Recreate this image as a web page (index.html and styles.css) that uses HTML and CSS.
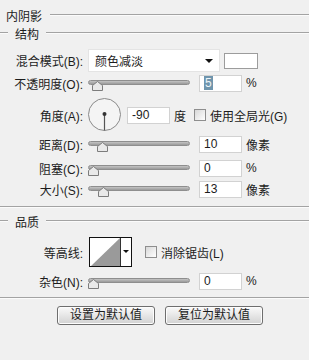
FILE: index.html
```html
<!DOCTYPE html>
<html lang="zh-CN">
<head>
    <meta charset="UTF-8">
    <meta name="viewport" content="width=device-width, initial-scale=1.0">
    <title>内阴影</title>
    <link rel="stylesheet" href="styles.css">
</head>
<body>
    <div class="panel">
        <div class="heading"><span>内阴影</span><i class="rule"></i></div>

        <div class="legend"><i class="rule-short"></i><span>结构</span><i class="rule"></i></div>

        <div class="row row-blend">
            <label class="lbl">混合模式(B):</label>
            <div class="select"><span>颜色减淡</span><i class="caret"></i></div>
            <div class="swatch"></div>
        </div>

        <div class="row row-slider row-opacity">
            <label class="lbl">不透明度(O):</label>
            <div class="slider">
                <div class="track"></div>
                <svg class="thumb" style="left:4px" width="11" height="10" viewBox="0 0 11 10"><polygon points="0.5,9.5 0.5,4.5 5.5,0.5 10.5,4.5 10.5,9.5" /></svg>
            </div>
            <div class="field"><span class="selected">5</span></div>
            <span class="unit">%</span>
        </div>

        <div class="row row-angle">
            <label class="lbl">角度(A):</label>
            <svg class="dial" width="36" height="36" viewBox="0 0 36 36">
                <circle cx="17.5" cy="17.5" r="16" fill="#f4f4f4" stroke="#8a8a8a" stroke-width="1" />
                <line x1="17.5" y1="17" x2="17.5" y2="33.5" stroke="#555" stroke-width="1.2" />
                <circle cx="17.5" cy="17" r="2" fill="#333" />
            </svg>
            <div class="field field-angle">-90</div>
            <span class="unit">度</span>
            <span class="check check-global"></span>
            <span class="check-text">使用全局光(G)</span>
        </div>

        <div class="row row-slider row-distance">
            <label class="lbl">距离(D):</label>
            <div class="slider">
                <div class="track"></div>
                <svg class="thumb" style="left:9px" width="11" height="10" viewBox="0 0 11 10"><polygon points="0.5,9.5 0.5,4.5 5.5,0.5 10.5,4.5 10.5,9.5" /></svg>
            </div>
            <div class="field">10</div>
            <span class="unit">像素</span>
        </div>

        <div class="row row-slider row-choke">
            <label class="lbl">阻塞(C):</label>
            <div class="slider">
                <div class="track"></div>
                <svg class="thumb" style="left:0px" width="11" height="10" viewBox="0 0 11 10"><polygon points="0.5,9.5 0.5,4.5 5.5,0.5 10.5,4.5 10.5,9.5" /></svg>
            </div>
            <div class="field">0</div>
            <span class="unit">%</span>
        </div>

        <div class="row row-slider row-size">
            <label class="lbl">大小(S):</label>
            <div class="slider">
                <div class="track"></div>
                <svg class="thumb" style="left:10px" width="11" height="10" viewBox="0 0 11 10"><polygon points="0.5,9.5 0.5,4.5 5.5,0.5 10.5,4.5 10.5,9.5" /></svg>
            </div>
            <div class="field">13</div>
            <span class="unit">像素</span>
        </div>

        <div class="separator sep-structure"></div>

        <div class="legend legend-quality"><i class="rule-short"></i><span>品质</span><i class="rule"></i></div>

        <div class="row row-contour">
            <label class="lbl">等高线:</label>
            <div class="contour">
                <svg class="curve" width="30" height="28" viewBox="0 0 30 28">
                    <rect width="30" height="28" fill="#fff" />
                    <polygon points="1,28 30,0 30,28" fill="#9a9a9a" />
                </svg>
                <div class="contour-drop"><i class="caret caret-small"></i></div>
            </div>
            <span class="check check-aa"></span>
            <span class="check-text">消除锯齿(L)</span>
        </div>

        <div class="row row-slider row-noise">
            <label class="lbl">杂色(N):</label>
            <div class="slider">
                <div class="track"></div>
                <svg class="thumb" style="left:0px" width="11" height="10" viewBox="0 0 11 10"><polygon points="0.5,9.5 0.5,4.5 5.5,0.5 10.5,4.5 10.5,9.5" /></svg>
            </div>
            <div class="field">0</div>
            <span class="unit">%</span>
        </div>

        <div class="separator sep-bottom"></div>

        <div class="buttons">
            <button class="btn">设置为默认值</button>
            <button class="btn">复位为默认值</button>
        </div>
    </div>
</body>
</html>
```

FILE: styles.css
```css
body {
    margin: 0;
    padding: 0;
    background-color: #f0f0f0;
    font-family: "Liberation Sans", "Noto Sans CJK SC", sans-serif;
    font-size: 12px;
    color: #1c1c1c;
}

.panel {
    width: 309px;
    height: 360px;
    display: flex;
    flex-direction: column;
}

.rule {
    flex: 1;
    border-top: 1px solid #a3a3a3;
    border-bottom: 1px solid #fbfbfb;
}

.rule-short {
    width: 8px;
    border-top: 1px solid #a3a3a3;
    border-bottom: 1px solid #fbfbfb;
}

.heading {
    display: flex;
    align-items: center;
    height: 18px;
    margin-top: 6px;
    padding-left: 6px;
}

.heading span {
    margin-right: 8px;
}

.legend {
    display: flex;
    align-items: center;
    height: 18px;
}

.legend span {
    margin: 0 7px;
}

.legend-quality {
    margin-top: 4px;
}

.separator {
    height: 0;
    border-top: 1px solid #a3a3a3;
    border-bottom: 1px solid #fbfbfb;
}

.sep-structure {
    margin-top: 7px;
}

.sep-bottom {
    margin-top: 6px;
}

.row {
    display: flex;
    align-items: center;
}

.lbl {
    width: 83px;
    text-align: right;
    white-space: nowrap;
}

/* blend mode */
.row-blend {
    height: 23px;
    margin-top: 7px;
}

.select {
    position: relative;
    width: 130px;
    height: 21px;
    margin-left: 5px;
    background-color: #fff;
    border: 1px solid #e4e4e4;
    display: flex;
    align-items: center;
    padding-left: 6px;
    box-sizing: content-box;
    width: 124px;
}

.caret {
    position: absolute;
    right: 6px;
    top: 9px;
    width: 0;
    height: 0;
    border-left: 4px solid transparent;
    border-right: 4px solid transparent;
    border-top: 4px solid #111;
}

.swatch {
    width: 32px;
    height: 14px;
    margin-left: 4px;
    background-color: #fff;
    border: 1px solid #9c9c9c;
}

/* sliders */
.row-slider {
    height: 20px;
}

.row-opacity { margin-top: 1px; }
.row-distance { margin-top: 1px; }
.row-choke { margin-top: 4px; }
.row-size { margin-top: 1px; }
.row-noise { margin-top: 4px; }

.slider {
    position: relative;
    width: 102px;
    height: 20px;
    margin-left: 5px;
}

.track {
    position: absolute;
    left: 0;
    right: 0;
    top: 7px;
    height: 3px;
    border: 1px solid #8e8e8e;
    border-radius: 3px;
    background: linear-gradient(#c4c4c4, #9a9a9a);
}

.thumb {
    position: absolute;
    top: 8px;
}

.thumb polygon {
    fill: #e9e9e9;
    stroke: #7c7c7c;
    stroke-width: 1;
}

.field {
    width: 37px;
    height: 15px;
    margin-left: 9px;
    padding-left: 4px;
    background-color: #fff;
    border: 1px solid #d2d2d2;
    display: flex;
    align-items: center;
    line-height: 15px;
}

.selected {
    background-color: #6f95ad;
    color: #eef4f8;
    padding: 0 1px;
    line-height: 14px;
}

.unit {
    margin-left: 4px;
}

/* angle */
.row-angle {
    height: 36px;
    margin-top: 4px;
}

.dial {
    margin-left: 4px;
}

.field-angle {
    margin-left: 4px;
}

.check {
    width: 10px;
    height: 10px;
    border: 1px solid #8e8e8e;
    background: linear-gradient(135deg, #d8d8d8, #ffffff);
}

.check-global {
    margin-left: 8px;
}

.check-text {
    margin-left: 4px;
}

/* contour */
.row-contour {
    height: 30px;
    margin-top: 7px;
}

.contour {
    display: flex;
    margin-left: 6px;
    border: 1px solid #111;
    height: 28px;
    background-color: #fff;
}

.curve {
    display: block;
    border-right: 1px solid #333;
}

.contour-drop {
    position: relative;
    width: 10px;
}

.caret-small {
    right: 2px;
    top: 12px;
    border-left-width: 3px;
    border-right-width: 3px;
    border-top-width: 3px;
}

.check-aa {
    margin-left: 13px;
}

/* buttons */
.buttons {
    display: flex;
    gap: 10px;
    margin-top: 7px;
    padding-left: 57px;
}

.btn {
    width: 98px;
    height: 19px;
    padding: 0;
    font-family: "Liberation Sans", "Noto Sans CJK SC", sans-serif;
    font-size: 12px;
    color: #1c1c1c;
    background: linear-gradient(#fafafa, #e6e6e6 50%, #d2d2d2);
    border: 1px solid #6e6e6e;
    border-radius: 3px;
    box-shadow: inset 0 0 0 1px #fdfdfd;
    line-height: 17px;
}
```
